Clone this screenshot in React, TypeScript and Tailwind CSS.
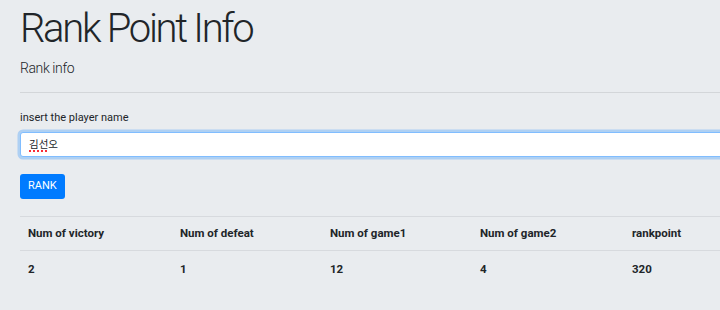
export default function App() {
  const headers = ["Num of victory", "Num of defeat", "Num of game1", "Num of game2", "rankpoint"];
  const values = ["2", "1", "12", "4", "320"];
  const widths = ["w-[152px]", "w-[150px]", "w-[150px]", "w-[152px]", "w-[150px]"];

  return (
    <div className="h-[310px] w-[720px] overflow-hidden bg-[#e9ecef] text-[#212529] font-['Roboto','Noto_Sans_CJK_KR',sans-serif]">
      <div className="flex w-[800px] flex-col items-start pl-5 pt-[4px]">
        <h1 className="text-[40px] font-light leading-[50px] tracking-[-2.3px]">Rank Point Info</h1>
        <p className="mt-[3px] text-[14px] font-light leading-[22px] tracking-[-0.4px]">Rank info</p>
        <hr className="mt-[13px] w-full border-t border-[#d3d6d9]" />

        <label className="mt-[17px] block text-[11px] leading-[16px]">insert the player name</label>
        <div className="mt-[6px] flex h-[25px] w-full items-center rounded-[3px] border border-[#80bdff] bg-white px-2 text-[10.5px] shadow-[0_0_0_2.5px_rgba(0,123,255,0.25)]">
          <span className="underline decoration-dotted decoration-red-500 decoration-2 underline-offset-[3px]">김선</span>
          <span>오</span>
        </div>

        <button className="mt-[17px] h-[25px] rounded-[3px] bg-[#007bff] px-[8px] text-[11px] text-white">
          RANK
        </button>

        <table className="mt-[17px] table-fixed border-collapse text-[11.5px] font-bold">
          <thead>
            <tr>
              {headers.map((h, i) => (
                <th key={h} className={`${widths[i]} border-t border-b-[1.5px] border-[#d7dade] px-[8px] py-[8px] text-left leading-[17px]`}>
                  {h}
                </th>
              ))}
            </tr>
          </thead>
          <tbody>
            <tr>
              {values.map((v) => (
                <td key={v} className="px-[8px] py-[10px] leading-[17px]">
                  {v}
                </td>
              ))}
            </tr>
          </tbody>
        </table>
      </div>
    </div>
  );
}
